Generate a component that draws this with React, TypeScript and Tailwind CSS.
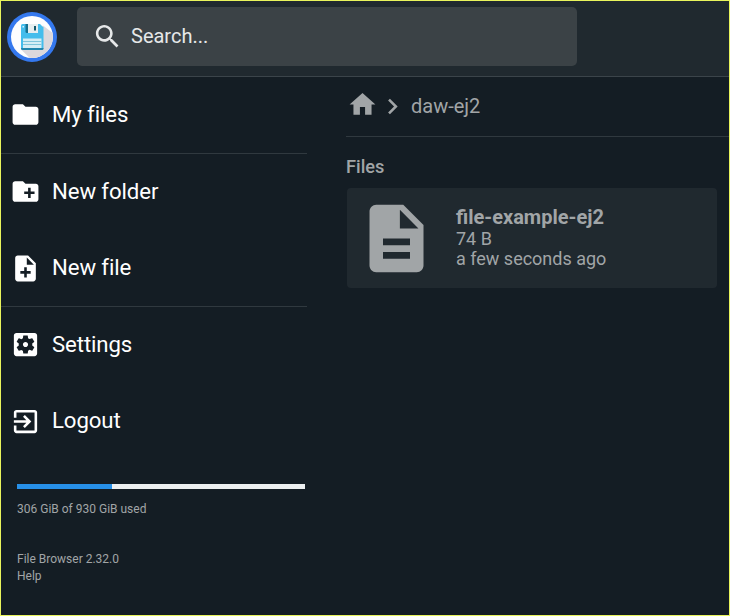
import type { ReactNode } from 'react';

const icons = {
  folder: 'M10 4H4c-1.1 0-1.99.9-1.99 2L2 18c0 1.1.9 2 2 2h16c1.1 0 2-.9 2-2V8c0-1.1-.9-2-2-2h-8l-2-2z',
  newFolder:
    'M20 6h-8l-2-2H4c-1.11 0-1.99.89-1.99 2L2 18c0 1.11.89 2 2 2h16c1.11 0 2-.89 2-2V8c0-1.11-.89-2-2-2zm-1 8h-3v3h-2v-3h-3v-2h3V9h2v3h3v2z',
  newFile:
    'M14 2H6c-1.1 0-1.99.9-1.99 2L4 20c0 1.1.89 2 1.99 2H18c1.1 0 2-.9 2-2V8l-6-6zm2 14h-3v3h-2v-3H8v-2h3v-3h2v3h3v2zm-3-7V3.500L18.500 9H13z',
  settings:
    'M12 10c-1.100 0-2 .9-2 2s.9 2 2 2 2-.9 2-2-.9-2-2-2zm7-7H5c-1.110 0-2 .9-2 2v14c0 1.100.89 2 2 2h14c1.110 0 2-.9 2-2V5c0-1.100-.89-2-2-2zm-1.750 9c0 .23-.02.460-.05.680l1.480 1.160c.13.110.17.3.080.450l-1.400 2.420c-.09.150-.27.210-.43.150l-1.740-.7c-.36.280-.76.510-1.180.690l-.26 1.850c-.03.170-.18.300-.35.300h-2.800c-.17 0-.32-.13-.35-.29l-.26-1.850c-.43-.18-.82-.41-1.180-.69l-1.740.7c-.16.060-.34 0-.43-.15l-1.400-2.420c-.09-.15-.05-.34.080-.45l1.480-1.160c-.03-.23-.05-.46-.05-.69 0-.23.020-.46.050-.68l-1.480-1.160c-.13-.11-.17-.3-.08-.45l1.400-2.420c.09-.15.270-.21.430-.15l1.740.7c.36-.28.760-.51 1.180-.69l.26-1.850c.03-.17.180-.3.350-.3h2.800c.17 0 .32.130.350.290l.26 1.850c.43.180.82.410 1.180.690l1.740-.7c.16-.06.340 0 .43.150l1.400 2.420c.09.150.05.340-.08.450l-1.480 1.160c.03.230.05.460.05.690z',
  logout:
    'M10.090 15.590L11.500 17l5-5-5-5-1.410 1.410L12.670 11H3v2h9.670l-2.580 2.590zM19 3H5c-1.110 0-2 .9-2 2v4h2V5h14v14H5v-4H3v4c0 1.100.89 2 2 2h14c1.100 0 2-.9 2-2V5c0-1.100-.9-2-2-2z',
  search:
    'M15.500 14h-.79l-.28-.27C15.410 12.590 16 11.110 16 9.500 16 5.910 13.090 3 9.500 3S3 5.910 3 9.500 5.910 16 9.500 16c1.610 0 3.090-.59 4.230-1.570l.27.280v.79l5 4.990L20.490 19l-4.990-5zm-6 0C7.010 14 5 11.990 5 9.500S7.010 5 9.500 5 14 7.010 14 9.500 11.990 14 9.500 14z',
  home: 'M10 20v-6h4v6h5v-8h3L12 3 2 12h3v8z',
  chevron: 'M10 6L8.590 7.410 13.170 12l-4.580 4.590L10 18l6-6z',
  file: 'M14 2H6c-1.100 0-1.990.9-1.990 2L4 20c0 1.100.89 2 1.990 2H18c1.100 0 2-.9 2-2V8l-6-6zm2 16H8v-2h8v2zm0-4H8v-2h8v2zm-3-5V3.500L18.500 9H13z',
};

function Icon({ name, className = 'size-[31px]' }: { name: keyof typeof icons; className?: string }) {
  return (
    <svg viewBox="0 0 24 24" fill="currentColor" className={`shrink-0 ${className}`} aria-hidden="true">
      <path d={icons[name]} />
    </svg>
  );
}

function Logo() {
  return (
    <svg viewBox="0 0 50 50" className="size-[50px] shrink-0" aria-label="File Browser">
      <circle cx="25" cy="25" r="25" fill="#3478ee" />
      <circle cx="25" cy="25" r="21" fill="#fdfdfe" />
      <path d="M36 13.500l9.400 7.300A21 21 0 0 1 22.500 45.850L14.500 38z" fill="#dcd8dc" />
      <path d="M14 13.500q0-1.500 1.500-1.500H33l3.500 3.500V36q0 1.500-1.500 1.500H15.500Q14 37.500 14 36z" fill="#44bdec" />
      <path d="M14 36v.5q0 1.500 1.500 1.500H35q1.500 0 1.500-1.500V36z" fill="#2386ad" />
      <path d="M18.500 12h3v9h-1.500q-1.500 0-1.500-1.500z" fill="#16708f" />
      <path d="M21 12h10v9H21z" fill="#e6eef0" />
      <path d="M27 14h2v4.500h-2z" fill="#14566c" />
      <path d="M15.500 14h1.500v1.500h-1.500z" fill="#d8f3fc" />
      <path d="M16 26.500h18.500V36H16z" fill="#d5edf4" />
      <path d="M16 29.500h18.500M16 32.500h18.500" stroke="#7fc4da" strokeWidth="1" />
    </svg>
  );
}

function NavItem({ icon, children }: { icon: keyof typeof icons; children: ReactNode }) {
  return (
    <a className="flex h-[76.5px] items-center gap-[11.5px] pl-[8.5px] text-[22.200px] tracking-[-0.1px] text-white">
      <Icon name={icon} className="mt-[-1px] size-[31px]" />
      <span className="mt-[-2px]">{children}</span>
    </a>
  );
}

export default function App() {
  return (
    <div className="flex h-[616px] w-[730px] flex-col overflow-hidden border border-[#e9f45c] bg-[#141d24] font-[Roboto,sans-serif] text-[#a1a5a7]">
      <header className="flex h-[76px] shrink-0 items-start border-b border-[#3b444a] bg-[#20292f] pl-[6px] pt-[6px]">
        <div className="pt-[5px]">
          <Logo />
        </div>
        <div className="ml-5 flex h-[59px] w-[500px] items-center gap-[8px] rounded-[5px] bg-[#3b4246] pl-[15px] text-[20px] text-[#e6e8e9]">
          <Icon name="search" className="size-[31px]" />
          <span className="mt-[-2px]">Search...</span>
        </div>
      </header>
      <div className="flex min-h-0 flex-1">
        <nav className="w-[306px] shrink-0">
          <div className="h-[77px] border-b border-[#30393f]">
            <NavItem icon="folder">My files</NavItem>
          </div>
          <div className="h-[153px] border-b border-[#30393f]">
            <NavItem icon="newFolder">New folder</NavItem>
            <NavItem icon="newFile">New file</NavItem>
          </div>
          <div>
            <NavItem icon="settings">Settings</NavItem>
            <NavItem icon="logout">Logout</NavItem>
          </div>
          <div className="ml-4 mt-[24px] w-72 text-[12px] leading-[17px]">
            <div className="h-[5px] bg-[#eceff0]">
              <div className="h-full w-[95px] bg-[#2790e8]" />
            </div>
            <p className="mt-[12px]">306 GiB of 930 GiB used</p>
            <p className="mt-[33px]">File Browser 2.32.0</p>
            <p>Help</p>
          </div>
        </nav>
        <main className="ml-[39px] min-w-0 flex-1">
          <div className="flex h-[60px] items-center border-b border-[#30393f] text-[20px]">
            <Icon name="home" className="ml-[0.5px] mt-[-5px] size-[31px]" />
            <Icon name="chevron" className="ml-[-1px] size-[31px]" />
            <span className="ml-[3.5px] mt-[-2px]">daw-ej2</span>
          </div>
          <h2 className="mt-[18px] text-[18.200px] font-medium leading-6">Files</h2>
          <div className="ml-px mt-[9px] flex h-[100px] w-[370px] items-center rounded-[4px] bg-[#20292f]">
            <Icon name="file" className="ml-[9px] size-[81px]" />
            <div className="ml-[19px] mt-[-2px] text-[18px] leading-5">
              <p className="text-[20px] font-bold leading-6">file-example-ej2</p>
              <p>74 B</p>
              <p>a few seconds ago</p>
            </div>
          </div>
        </main>
      </div>
    </div>
  );
}
